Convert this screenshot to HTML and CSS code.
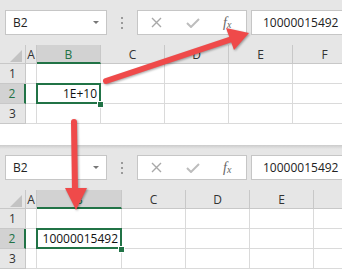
FILE: index.html
```html
<!DOCTYPE html>
<html lang="en">
<head>
    <meta charset="UTF-8">
    <title>1E+10 vs 10000015492</title>
    <link rel="stylesheet" href="styles.css">
</head>
<body>
<div class="shot">

    <!-- before: number shown in scientific format -->
    <section class="sheet sheet-top">
        <div class="formula-bar">
            <div class="name-box"><span>B2</span><i class="dd"></i></div>
            <div class="dots"><i></i><i></i><i></i></div>
            <div class="edit-box">
                <svg class="ico-x" width="11" height="11" viewBox="0 0 11 11"><path d="M1 1L10 10M10 1L1 10" stroke="#a8a8a8" stroke-width="1.4" fill="none"/></svg>
                <svg class="ico-ok" width="14" height="10" viewBox="0 0 14 10"><path d="M1 5L5 9L13 1" stroke="#bdbdbd" stroke-width="2" fill="none"/></svg>
                <span class="fx">f<sub>x</sub></span>
            </div>
            <div class="formula-input">10000015492</div>
        </div>

        <div class="grid">
            <div class="row">
                <div class="hdr rh corner"><i class="tri"></i></div>
                <div class="hdr col-a">A</div>
                <div class="hdr col-b sel-col">B</div>
                <div class="hdr col">C</div>
                <div class="hdr col">D</div>
                <div class="hdr col">E</div>
                <div class="hdr col">F</div>
            </div>
            <div class="row">
                <div class="hdr rh">1</div>
                <div class="cell col-a"></div>
                <div class="cell col-b"></div>
                <div class="cell col"></div>
                <div class="cell col"></div>
                <div class="cell col"></div>
                <div class="cell col"></div>
            </div>
            <div class="row">
                <div class="hdr rh sel-row">2</div>
                <div class="cell col-a"></div>
                <div class="cell col-b active">1E+10</div>
                <div class="cell col"></div>
                <div class="cell col"></div>
                <div class="cell col"></div>
                <div class="cell col"></div>
            </div>
            <div class="row">
                <div class="hdr rh">3</div>
                <div class="cell col-a"></div>
                <div class="cell col-b"></div>
                <div class="cell col"></div>
                <div class="cell col"></div>
                <div class="cell col"></div>
                <div class="cell col"></div>
            </div>
        </div>
    </section>

    <!-- after: column B widened -->
    <section class="sheet sheet-bottom">
        <div class="formula-bar">
            <div class="name-box"><span>B2</span><i class="dd"></i></div>
            <div class="dots"><i></i><i></i><i></i></div>
            <div class="edit-box">
                <svg class="ico-x" width="11" height="11" viewBox="0 0 11 11"><path d="M1 1L10 10M10 1L1 10" stroke="#a8a8a8" stroke-width="1.4" fill="none"/></svg>
                <svg class="ico-ok" width="14" height="10" viewBox="0 0 14 10"><path d="M1 5L5 9L13 1" stroke="#bdbdbd" stroke-width="2" fill="none"/></svg>
                <span class="fx">f<sub>x</sub></span>
            </div>
            <div class="formula-input">10000015492</div>
        </div>

        <div class="grid wide-b">
            <div class="row">
                <div class="hdr rh corner"><i class="tri"></i></div>
                <div class="hdr col-a">A</div>
                <div class="hdr col-b sel-col">B</div>
                <div class="hdr col">C</div>
                <div class="hdr col">D</div>
                <div class="hdr col">E</div>
                <div class="hdr col"></div>
            </div>
            <div class="row">
                <div class="hdr rh">1</div>
                <div class="cell col-a"></div>
                <div class="cell col-b"></div>
                <div class="cell col"></div>
                <div class="cell col"></div>
                <div class="cell col"></div>
                <div class="cell col"></div>
            </div>
            <div class="row">
                <div class="hdr rh sel-row">2</div>
                <div class="cell col-a"></div>
                <div class="cell col-b active">10000015492</div>
                <div class="cell col"></div>
                <div class="cell col"></div>
                <div class="cell col"></div>
                <div class="cell col"></div>
            </div>
            <div class="row">
                <div class="hdr rh">3</div>
                <div class="cell col-a"></div>
                <div class="cell col-b"></div>
                <div class="cell col"></div>
                <div class="cell col"></div>
                <div class="cell col"></div>
                <div class="cell col"></div>
            </div>
        </div>
    </section>

    <svg class="arrows" width="342" height="269" viewBox="0 0 342 269">
        <g fill="#ef4a4a" stroke="#ef4a4a">
            <line x1="106" y1="81" x2="232" y2="39" stroke-width="6" stroke-linecap="round"/>
            <polygon points="249,33 226,28 234,50" stroke="none"/>
            <line x1="74" y1="122" x2="75" y2="192" stroke-width="6" stroke-linecap="round"/>
            <polygon points="76,210 65,188 87,188" stroke="none"/>
        </g>
    </svg>
</div>
</body>
</html>
```

FILE: styles.css
```css
body {
    margin: 0;
    background: #fff;
    font-family: "Open Sans", Arial, sans-serif;
    font-size: 12px;
    color: #111;
}
.shot {
    position: relative;
    width: 342px;
    height: 269px;
    overflow: hidden;
}
.sheet {
    background: #e6e6e6;
    height: 124px;
    overflow: hidden;
}
.sheet-bottom {
    margin-top: 21px;
    background-image: linear-gradient(#cbcbcb, #e6e6e6 4px);
}

/* formula bar */
.formula-bar {
    display: flex;
    height: 25px;
    padding-top: 10px;
}
.formula-bar > div {
    flex: none;
}
.name-box {
    margin-left: 5px;
    width: 102px;
    box-sizing: border-box;
    border: 1px solid #c6c6c6;
    background: #fff;
    display: flex;
    align-items: center;
    justify-content: space-between;
    padding: 0 7px 0 7px;
    color: #222;
}
.dd {
    width: 0;
    height: 0;
    border-left: 3px solid transparent;
    border-right: 3px solid transparent;
    border-top: 3px solid #777;
}
.dots {
    width: 30px;
    display: flex;
    flex-direction: column;
    align-items: center;
    justify-content: center;
    gap: 3px;
}
.dots i {
    width: 2px;
    height: 2px;
    background: #9a9a9a;
}
.edit-box {
    width: 110px;
    box-sizing: border-box;
    border: 1px solid #c6c6c6;
    background: #fff;
    display: flex;
    align-items: center;
}
.ico-x {
    margin-left: 13px;
}
.ico-ok {
    margin-left: 24px;
}
.fx {
    margin-left: 23px;
    font-family: "Liberation Serif", serif;
    font-style: italic;
    font-size: 14px;
    color: #666;
    line-height: 1;
}
.fx sub {
    font-size: 10px;
    vertical-align: -1px;
}
.formula-input {
    margin-left: 4px;
    width: 120px;
    box-sizing: border-box;
    border: 1px solid #c6c6c6;
    border-right: none;
    background: #fff;
    padding-left: 11px;
    line-height: 23px;
    color: #222;
    white-space: nowrap;
}

/* grid */
.grid {
    margin-top: 10px;
}
.row {
    display: flex;
    height: 20px;
}
.row:first-child {
    height: 19px;
}
.hdr,
.cell {
    flex: none;
    box-sizing: border-box;
    border-right: 1px solid #c8c8c8;
    border-bottom: 1px solid #c8c8c8;
    line-height: 19px;
}
.hdr {
    background: #e6e6e6;
    text-align: center;
    color: #333;
}
.cell {
    background: #fff;
    border-color: #dadada;
    text-align: right;
    padding-right: 3px;
    color: #111;
}
.rh { width: 26px; }
.col-a { width: 11px; }
.col-b { width: 64px; }
.wide-b .col-b { width: 85px; }
.col { width: 64px; }

.corner {
    position: relative;
}
.tri {
    position: absolute;
    right: 3px;
    bottom: 1px;
    width: 0;
    height: 0;
    border-left: 12px solid transparent;
    border-bottom: 12px solid #c3c3c3;
}
.sel-col {
    background: #d2d2d2;
    color: #217346;
    border-bottom: 2px solid #217346;
}
.sel-row {
    background: #d2d2d2;
    color: #217346;
    border-right: 2px solid #217346;
}
.active {
    position: relative;
}
.active::before {
    content: "";
    position: absolute;
    top: -1px;
    left: -1px;
    right: -1px;
    bottom: -1px;
    border: 2px solid #217346;
}
.active::after {
    content: "";
    position: absolute;
    right: -4px;
    bottom: -5px;
    width: 5px;
    height: 5px;
    background: #217346;
    border: 1px solid #fff;
}

.arrows {
    position: absolute;
    top: 0;
    left: 0;
    pointer-events: none;
    filter: drop-shadow(1px 1px 1px rgba(0, 0, 0, 0.35));
}
```
